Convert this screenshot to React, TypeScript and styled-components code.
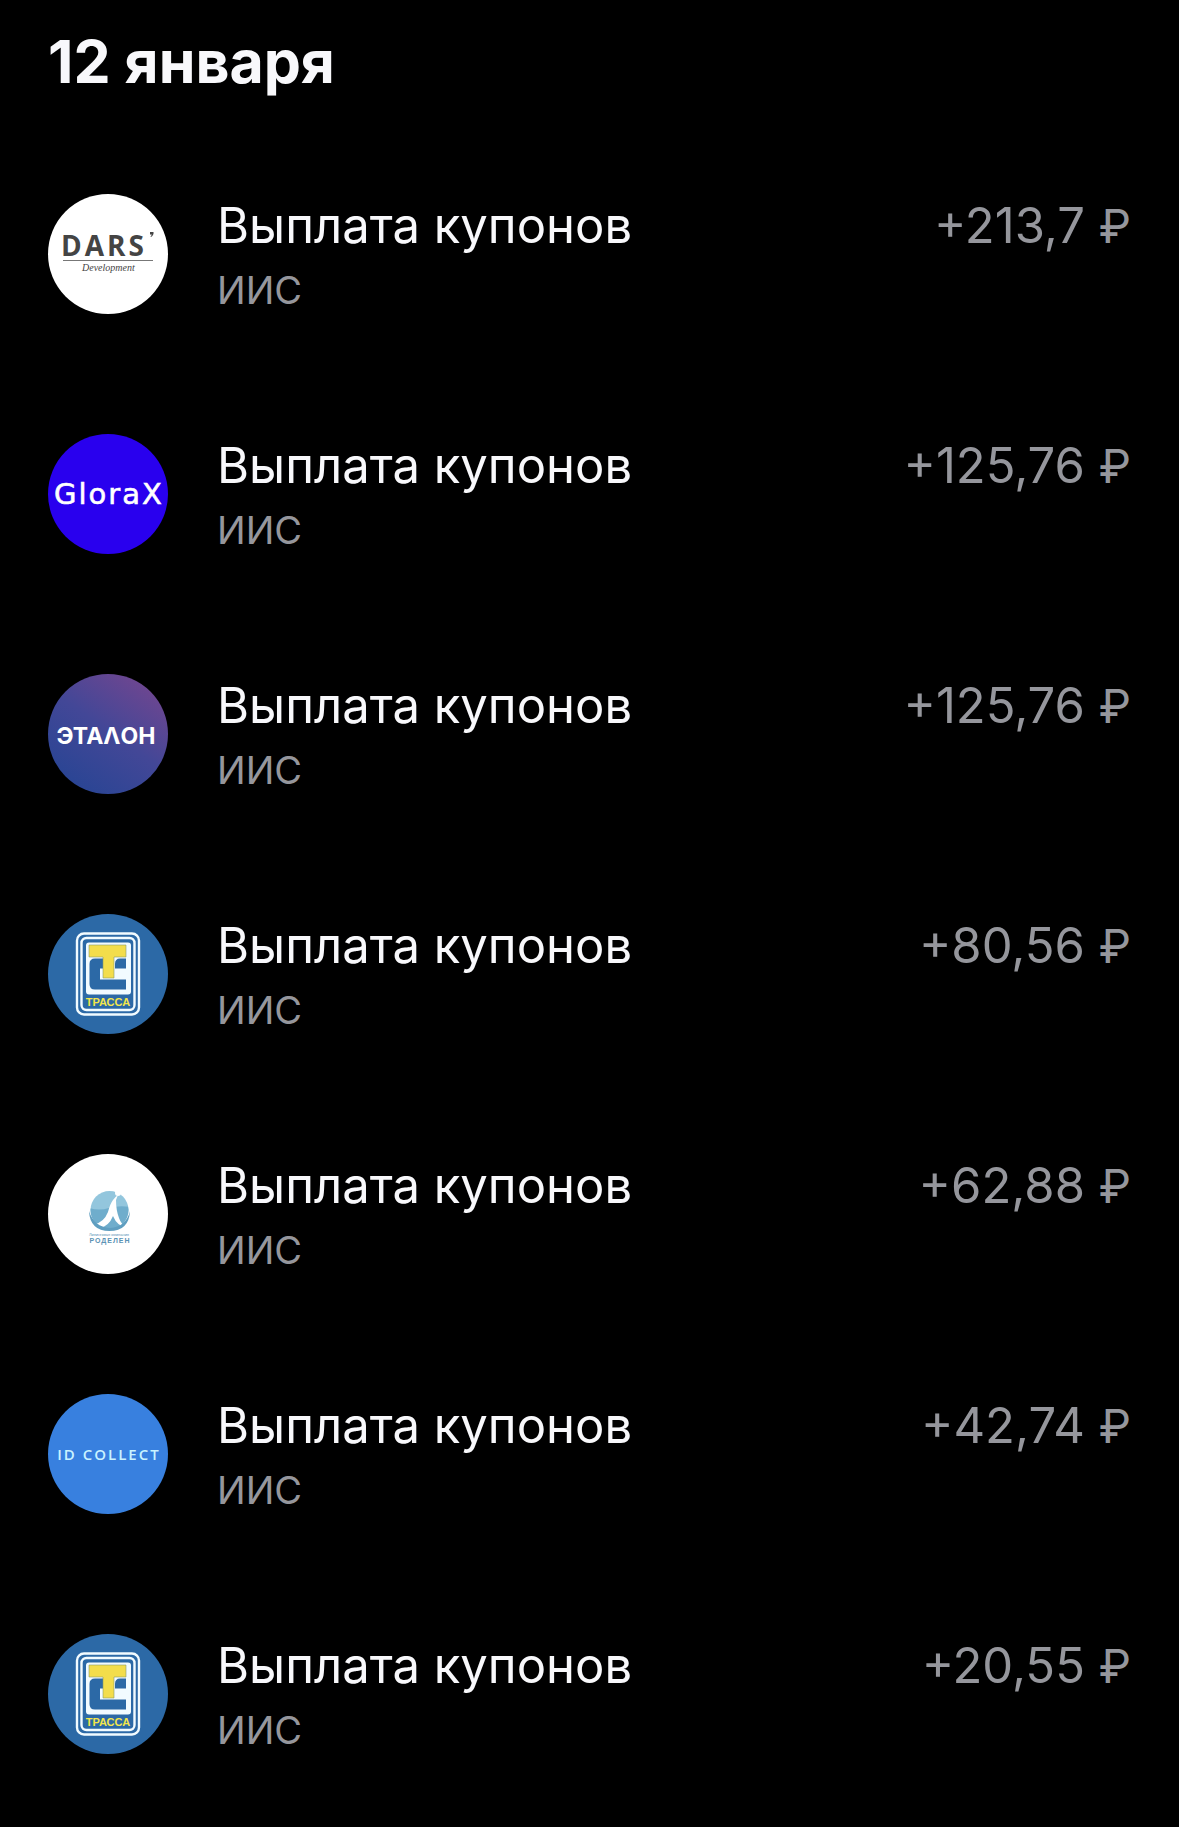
import React from "react";
import styled, { createGlobalStyle } from "styled-components";

type Issuer = "dars" | "glorax" | "etalon" | "trassa" | "rodelen" | "idcollect";

interface Payment {
  id: number;
  issuer: Issuer;
  amount: string;
}

const payments: Payment[] = [
  { id: 1, issuer: "dars", amount: "+213,7" },
  { id: 2, issuer: "glorax", amount: "+125,76" },
  { id: 3, issuer: "etalon", amount: "+125,76" },
  { id: 4, issuer: "trassa", amount: "+80,56" },
  { id: 5, issuer: "rodelen", amount: "+62,88" },
  { id: 6, issuer: "idcollect", amount: "+42,74" },
  { id: 7, issuer: "trassa", amount: "+20,55" },
];

const DarsLogo = () => (
  <Logo viewBox="0 0 120 120">
    <circle cx="60" cy="60" r="60" fill="#fff" />
    <DarsName x="13" y="62">
      DARS
    </DarsName>
    <path d="M102 38h3.500q.5 3-2.500 5l-.5-.6q1.200-.8 1.200-1.800h-1.700z" fill="#444" />
    <path d="M15 66.500h90" stroke="#777" strokeWidth="1" />
    <DarsCaption x="34" y="77">
      Development
    </DarsCaption>
  </Logo>
);

const GloraxLogo = () => (
  <Logo viewBox="0 0 120 120">
    <circle cx="60" cy="60" r="60" fill="#2900ee" />
    <GloraxName x="61" y="70" textAnchor="middle">
      GloraX
    </GloraxName>
  </Logo>
);

const EtalonLogo = () => (
  <Logo viewBox="0 0 120 120">
    <defs>
      <linearGradient id="etalon" x1="0.35" y1="1" x2="0.95" y2="0.15">
        <stop offset="0" stopColor="#2b4594" />
        <stop offset="0.5" stopColor="#434797" />
        <stop offset="1" stopColor="#6f4690" />
      </linearGradient>
    </defs>
    <circle cx="60" cy="60" r="60" fill="url(#etalon)" />
    <EtalonName x="58" y="70" textAnchor="middle">
      ЭТАΛОН
    </EtalonName>
  </Logo>
);

const TrassaLogo = () => (
  <Logo viewBox="0 0 120 120">
    <circle cx="60" cy="60" r="60" fill="#2c69a6" />
    <rect x="29" y="19.500" width="62" height="81" rx="7" fill="none" stroke="#f2fbff" strokeWidth="2.400" />
    <rect x="33.500" y="24" width="53" height="72" rx="5" fill="none" stroke="#f2fbff" strokeWidth="2.400" />
    <rect x="38" y="28.500" width="45" height="52" rx="3" fill="#f2fbff" />
    <path
      d="M47 44.500h8v10h-3v11h26v10H47q-5.500 0-5.500-5.500V50q0-5.500 5.500-5.500zM67 54.500V50q0-5.500 5-5.500h6v10z"
      fill="#2c69a6"
    />
    <path d="M41 31h37v12H66v21H55V43H41z" fill="#f3dd4b" stroke="#8a9a6a" strokeWidth="0.600" />
    <TrassaName x="60" y="92" textAnchor="middle">
      ТРАССА
    </TrassaName>
  </Logo>
);

const RodelenLogo = () => (
  <Logo viewBox="0 0 120 120">
    <defs>
      <clipPath id="rodelenGlobe">
        <circle cx="61.500" cy="56" r="19" />
      </clipPath>
    </defs>
    <circle cx="60" cy="60" r="60" fill="#fff" />
    <g clipPath="url(#rodelenGlobe)">
      <rect x="41" y="36" width="42" height="41" fill="#93c6dd" />
      <path d="M41 54q10 3 20 0t22-1v24H41z" fill="#6fadcc" />
    </g>
    <circle cx="70" cy="39" r="3" fill="#fff" />
    <path
      d="M70 41q-3 2-5 5-3 4-5 12-4 10-13 12l5 4q9-2 13-12 4 10 14 12-6-4-8-10-3-8-3-18z"
      fill="#fff"
    />
    <path d="M41 57q1 20 20.500 20T82 57q-4 16-20 17Q46 73 41 57z" fill="#5f9ec0" />
    <RodelenCaption x="61" y="82" textAnchor="middle">
      Лизинговая компания
    </RodelenCaption>
    <RodelenName x="62" y="89" textAnchor="middle">
      РОДЕЛЕН
    </RodelenName>
  </Logo>
);

const IdCollectLogo = () => (
  <Logo viewBox="0 0 120 120">
    <circle cx="60" cy="60" r="60" fill="#3880df" />
    <IdCollectName x="61" y="66" textAnchor="middle">
      ID COLLECT
    </IdCollectName>
  </Logo>
);

const logos: Record<Issuer, React.FC> = {
  dars: DarsLogo,
  glorax: GloraxLogo,
  etalon: EtalonLogo,
  trassa: TrassaLogo,
  rodelen: RodelenLogo,
  idcollect: IdCollectLogo,
};

const PaymentItem = ({ issuer, amount }: Payment) => {
  const IssuerLogo = logos[issuer];
  return (
    <Row>
      <IssuerLogo />
      <Info>
        <Title>Выплата купонов</Title>
        <Account>ИИС</Account>
      </Info>
      <Amount>
        {amount} <Currency>₽</Currency>
      </Amount>
    </Row>
  );
};

const App = () => {
  return (
    <>
      <GlobalStyle />
      <Page>
        <DateTitle>12 января</DateTitle>
        <List>
          {payments.map((payment) => (
            <PaymentItem key={payment.id} {...payment} />
          ))}
        </List>
      </Page>
    </>
  );
};

export default App;

const GlobalStyle = createGlobalStyle`
  * {
    box-sizing: border-box;
  }

  body {
    margin: 0;
    background-color: #000;
    font-family: Inter, "Noto Sans", sans-serif;
  }
`;

const Page = styled.main`
  min-height: 100vh;
  padding: 24px 48px 0;
  color: #f8f8fb;
`;

const DateTitle = styled.h1`
  margin: 0;
  padding-bottom: 34px;
  font-size: 59px;
  font-weight: 700;
  line-height: 76px;
`;

const List = styled.ul`
  margin: 0;
  padding: 0;
  list-style: none;
`;

const Row = styled.li`
  display: flex;
  align-items: flex-start;
  min-height: 240px;
  padding-top: 60px;
`;

const Logo = styled.svg`
  flex-shrink: 0;
  width: 120px;
  height: 120px;
`;

const Info = styled.div`
  flex: 1;
  min-width: 0;
  padding-left: 49px;
`;

const Title = styled.div`
  font-size: 49px;
  line-height: 64px;
`;

const Account = styled.div`
  font-size: 38px;
  line-height: 64px;
  color: #95969c;
`;

const Amount = styled.div`
  font-size: 49px;
  line-height: 64px;
  white-space: nowrap;
  color: #95969c;
`;

const Currency = styled.span`
  font-size: 46px;
`;

const DarsName = styled.text`
  font-family: "Open Sans", sans-serif;
  font-size: 28px;
  font-weight: 700;
  letter-spacing: 3px;
  fill: #444;
`;

const DarsCaption = styled.text`
  font-family: "Liberation Serif", serif;
  font-size: 10px;
  font-style: italic;
  fill: #444;
`;

const GloraxName = styled.text`
  font-family: "DejaVu Sans", sans-serif;
  font-size: 29px;
  letter-spacing: 2px;
  fill: #fff;
  stroke: #fff;
  stroke-width: 0.6px;
`;

const EtalonName = styled.text`
  font-family: Inter, sans-serif;
  font-size: 23px;
  font-weight: 700;
  fill: #fff;
`;

const TrassaName = styled.text`
  font-family: "Liberation Sans", sans-serif;
  font-size: 11px;
  font-weight: 700;
  fill: #f3e64b;
`;

const RodelenCaption = styled.text`
  font-family: "Liberation Sans", sans-serif;
  font-size: 4px;
  fill: #5b93b5;
`;

const RodelenName = styled.text`
  font-family: "Liberation Sans", sans-serif;
  font-size: 7px;
  font-weight: 700;
  letter-spacing: 1px;
  fill: #5b93b5;
`;

const IdCollectName = styled.text`
  font-family: "Open Sans", sans-serif;
  font-size: 15px;
  font-weight: 600;
  letter-spacing: 2px;
  fill: #c9f3ff;
`;
